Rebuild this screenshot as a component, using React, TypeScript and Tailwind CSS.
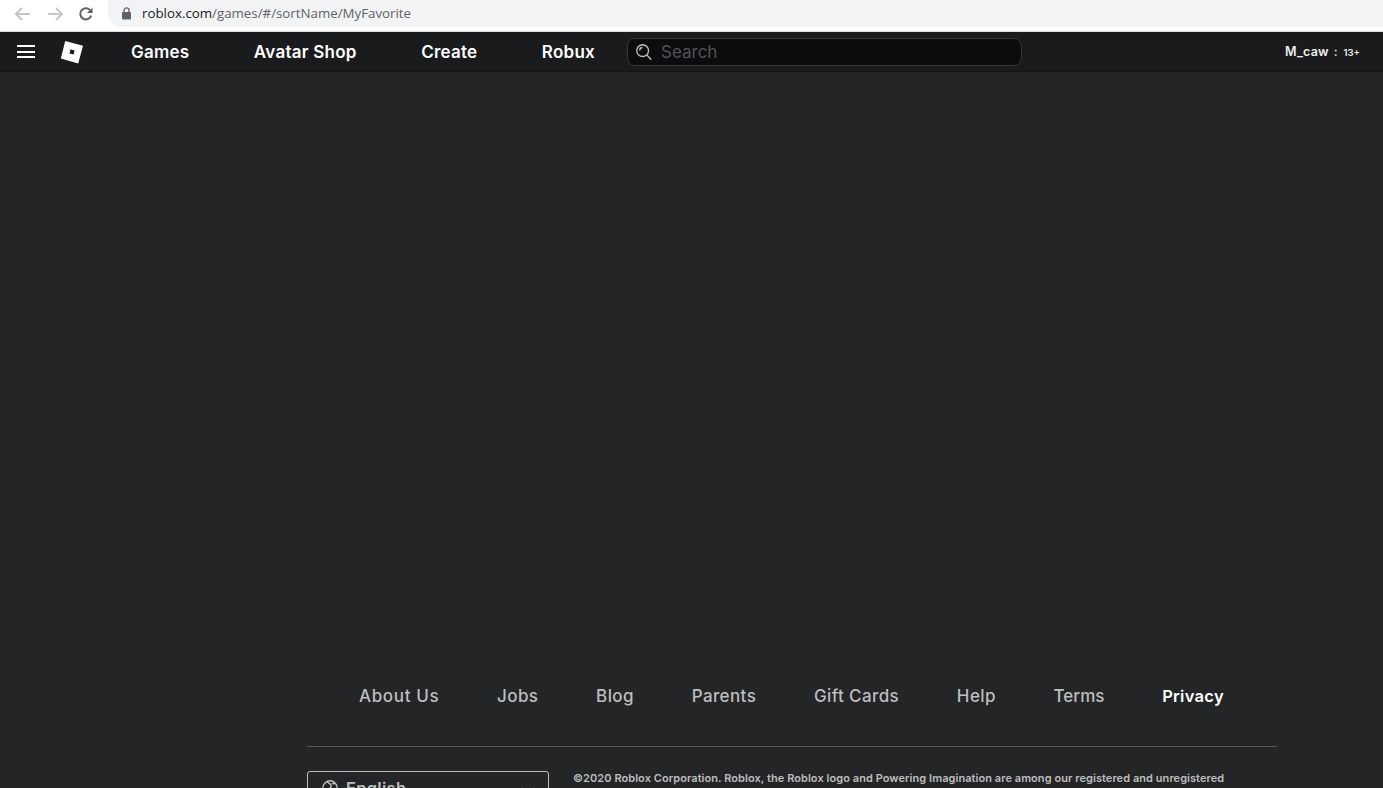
const NAV_ITEMS = ['Games', 'Avatar Shop', 'Create', 'Robux'];
const FOOTER_LINKS = [
  { label: 'About Us', tracking: 'tracking-[0.65px]' },
  { label: 'Jobs', tracking: 'tracking-[0.4px]' },
  { label: 'Blog', tracking: 'tracking-[0.4px]' },
  { label: 'Parents', tracking: 'tracking-[0.4px]' },
  { label: 'Gift Cards', tracking: 'tracking-[0.4px]' },
  { label: 'Help', tracking: 'tracking-[0.4px]' },
  { label: 'Terms', tracking: 'tracking-[0px]' },
];

function BrowserBar() {
  return (
    <div className="flex h-[32px] shrink-0 items-start border-b border-[#dadce0] bg-white">
      <div className="flex h-[27px] w-[108px] shrink-0 items-center pl-[14px]">
        <svg width="18" height="16" viewBox="0 0 18 16" fill="none" stroke="#c4c6c9" strokeWidth="2">
          <path d="M16 8H2M8 2L2 8l6 6" />
        </svg>
        <svg className="ml-[14px]" width="18" height="16" viewBox="0 0 18 16" fill="none" stroke="#c4c6c9" strokeWidth="2">
          <path d="M2 8h14M10 2l6 6-6 6" />
        </svg>
        <svg className="ml-[14px]" width="16" height="16" viewBox="0 0 16 16" fill="none">
          <path d="M13.2 9.6A5.6 5.6 0 1 1 12 4" stroke="#5f6368" strokeWidth="2" />
          <path d="M14.5 1.5v5.6H8.9z" fill="#5f6368" />
        </svg>
      </div>
      <div className="flex h-[27px] flex-1 items-center rounded-bl-[14px] bg-[#f1f3f4] pl-[13px]">
        <svg width="11" height="13" viewBox="0 0 11 13" fill="none">
          <rect x="1" y="5" width="9" height="7.5" rx="1" fill="#5f6368" />
          <path d="M3 5.5V3.4a2.5 2.5 0 0 1 5 0v2.1" stroke="#5f6368" strokeWidth="1.3" />
        </svg>
        <span className="ml-[10px] font-['Open_Sans',sans-serif] text-[13.3px] text-[#5f6368]">
          <span className="text-[#202124]">roblox.com</span>/games/#/sortName/MyFavorite
        </span>
      </div>
    </div>
  );
}

function TopNav() {
  return (
    <div className="flex h-[40px] shrink-0 items-center border-b border-[#141517] bg-[#1a1b1d] font-['Inter',sans-serif] text-white">
      <div className="ml-[17px] flex w-[18px] flex-col gap-[3.5px]">
        <span className="h-[2px] bg-white" />
        <span className="h-[2px] bg-white" />
        <span className="h-[2px] bg-white" />
      </div>
      <svg className="ml-[25px]" width="24" height="24" viewBox="0 0 24 24">
        <path fillRule="evenodd" d="M5.2 1L23 5.8 18.2 23.4.8 18.6zM10.6 9.3l-1.1 4.1 4.1 1.1 1-4.1z" fill="#fff" />
      </svg>
      <div className="ml-[47px] flex w-[464px] justify-between pt-[2px] text-[17px] font-semibold tracking-[0.25px]">
        {NAV_ITEMS.map(item => (
          <span key={item}>{item}</span>
        ))}
      </div>
      <div className="ml-[32px] flex h-[28px] w-[395px] items-center rounded-[8px] border border-[#343538] bg-[#0b0c0d] pl-[7px]">
        <svg width="18" height="18" viewBox="0 0 17 17" fill="none" stroke="#bdbebe" strokeWidth="1.3">
          <circle cx="7.2" cy="7.2" r="5.6" />
          <path d="M11.2 11.4l4.2 4.4M4.4 7a2.8 2.8 0 0 1 2.6-2.8" />
        </svg>
        <span className="ml-[8px] pt-[2px] text-[17px] text-[#515356]">Search</span>
      </div>
      <div className="ml-auto mr-[23px] flex items-baseline pt-[2px] text-[#eeeeee]">
        <span className="text-[12.5px] font-semibold tracking-[0.2px]">M_caw</span>
        <span className="ml-[5px] text-[12px] font-semibold">:</span>
        <span className="ml-[6px] text-[9.5px] font-semibold">13+</span>
      </div>
    </div>
  );
}

function Footer() {
  return (
    <footer className="ml-[307px] w-[970px] shrink-0 font-['Inter',sans-serif]">
      <div className="flex items-baseline justify-between border-b border-[#56585a] pb-[39px] pl-[52px] pr-[53px] text-[17px] font-medium leading-[22px] text-[#bdbebe]">
        {FOOTER_LINKS.map(link => (
          <span key={link.label} className={link.tracking}>{link.label}</span>
        ))}
        <span className="text-[16.5px] font-semibold tracking-[0.3px] text-white">Privacy</span>
      </div>
      <div className="mt-[24px] flex items-start">
        <div className="flex h-[40px] w-[242px] shrink-0 items-start rounded-[3px] border border-[#bdbebe] pl-[14px] pt-[8px]">
          <svg width="16" height="16" viewBox="0 0 16 16" fill="none" stroke="#bdbebe" strokeWidth="1.4">
            <circle cx="8" cy="8" r="7.2" />
            <path d="M5 1.5c1 2 3 1.500 4 3.500s-2 3-1 5M13 3c-1 1-2 1-3 0" />
          </svg>
          <span className="ml-[8px] text-[16.5px] font-semibold leading-[16px] tracking-[0.3px] text-[#bdbebe]">English</span>
          <svg className="ml-auto mr-[13px] mt-[7px]" width="14" height="8" viewBox="0 0 14 8" fill="none" stroke="#bdbebe" strokeWidth="1.4">
            <path d="M1 1l6 6 6-6" />
          </svg>
        </div>
        <p className="ml-[24px] w-[680px] text-[11px] font-semibold leading-[14px] tracking-[0.06px] text-[#bdbebe]">
          ©2020 Roblox Corporation. Roblox, the Roblox logo and Powering Imagination are among our registered and unregistered
        </p>
      </div>
    </footer>
  );
}

export default function App() {
  return (
    <div className="flex h-[788px] flex-col overflow-hidden bg-[#232527]">
      <BrowserBar />
      <TopNav />
      <main className="h-[613px] shrink-0" />
      <Footer />
    </div>
  );
}
